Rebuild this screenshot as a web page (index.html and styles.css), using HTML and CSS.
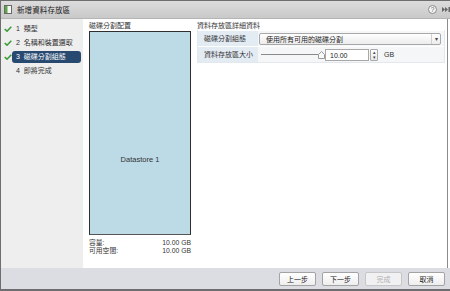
FILE: index.html
```html
<!DOCTYPE html>
<html lang="zh-Hant">
<head>
  <meta charset="UTF-8">
  <title>新增資料存放區</title>
  <link rel="stylesheet" href="styles.css">
</head>
<body>
  <div class="dialog">
    <div class="titlebar">
      <svg class="title-icon" width="8" height="9" viewBox="0 0 8 9">
        <rect x="0.5" y="0.5" width="7" height="8" fill="#f6f6f6" stroke="#6a6a6a"/>
        <rect x="1" y="1" width="2.5" height="7" fill="#5aa845"/>
      </svg>
      <span class="title">新增資料存放區</span>
      <span class="tools">
        <svg width="9" height="9" viewBox="0 0 9 9">
          <circle cx="4.5" cy="4.5" r="4" fill="#f4f4f4" stroke="#8a8a8a"/>
          <text x="4.5" y="7" text-anchor="middle" font-size="6.5" font-family="Liberation Sans, sans-serif" fill="#666">?</text>
        </svg>
        <svg width="8" height="9" viewBox="0 0 8 9">
          <path d="M0 2 L3 4.5 L0 7 Z M3 2 L6 4.5 L3 7 Z" fill="#666"/>
          <rect x="6.5" y="2" width="1.5" height="5" fill="#666"/>
        </svg>
      </span>
    </div>

    <div class="main">
      <div class="steps">
        <div class="step">
          <span class="check"><svg width="8" height="6" viewBox="0 0 8 6"><path d="M0.7 3 L3 5.2 L7.3 0.8" fill="none" stroke="#3f9b3a" stroke-width="1.6"/></svg></span>
          <span class="step-label">1&nbsp; 類型</span>
        </div>
        <div class="step">
          <span class="check"><svg width="8" height="6" viewBox="0 0 8 6"><path d="M0.7 3 L3 5.2 L7.3 0.8" fill="none" stroke="#3f9b3a" stroke-width="1.6"/></svg></span>
          <span class="step-label">2&nbsp; 名稱和裝置選取</span>
        </div>
        <div class="step">
          <span class="check"><svg width="8" height="6" viewBox="0 0 8 6"><path d="M0.7 3 L3 5.2 L7.3 0.8" fill="none" stroke="#3f9b3a" stroke-width="1.6"/></svg></span>
          <span class="step-label current">3&nbsp; 磁碟分割組態</span>
        </div>
        <div class="step">
          <span class="check"></span>
          <span class="step-label">4&nbsp; 即將完成</span>
        </div>
      </div>

      <div class="content">
        <div class="layout-col">
          <div class="heading">磁碟分割配置</div>
          <div class="partition">Datastore 1</div>
          <div class="info">
            <div class="info-row"><span>容量:</span><span>10.00 GB</span></div>
            <div class="info-row"><span>可用空間:</span><span>10.00 GB</span></div>
          </div>
        </div>

        <div class="details-col">
          <div class="heading">資料存放區詳細資料</div>
          <div class="details">
            <div class="row">
              <div class="label">磁碟分割組態</div>
              <div class="value">
                <div class="select">
                  <span>使用所有可用的磁碟分割</span>
                  <span class="arrow">▾</span>
                </div>
              </div>
            </div>
            <div class="row">
              <div class="label">資料存放區大小</div>
              <div class="value">
                <div class="slider">
                  <span class="track"></span>
                  <svg class="thumb" width="7" height="8" viewBox="0 0 7 8">
                    <path d="M3.5 0.5 L6.5 3.5 L6.5 7.5 L0.5 7.5 L0.5 3.5 Z" fill="#fafafa" stroke="#999"/>
                  </svg>
                </div>
                <div class="number">10.00</div>
                <div class="spinner">
                  <span>▴</span>
                  <span>▾</span>
                </div>
                <span class="unit">GB</span>
              </div>
            </div>
          </div>
        </div>
      </div>
    </div>

    <div class="footer">
      <button class="btn">上一步</button>
      <button class="btn">下一步</button>
      <button class="btn disabled">完成</button>
      <button class="btn">取消</button>
    </div>
  </div>
</body>
</html>
```

FILE: styles.css
```css
/* Basic Reset */
* {
  margin: 0;
  padding: 0;
  box-sizing: border-box;
}

body {
  background: #ffffff;
  font-family: "Liberation Sans", "Noto Sans CJK TC", sans-serif;
  font-size: 7px;
  color: #333;
}

.dialog {
  width: 450px;
  height: 291px;
  border: 1px solid #6e6e6e;
  border-right: none;
  display: flex;
  flex-direction: column;
  background: #fff;
}

/* Title bar */
.titlebar {
  height: 18px;
  display: flex;
  align-items: center;
  padding-left: 3px;
  background: linear-gradient(#dcdcdc, #c9c9c9);
  border-bottom: 1px solid #b5b5b5;
}

.title-icon {
  margin-right: 5px;
}

.title {
  font-size: 7.5px;
  color: #222;
  letter-spacing: 0.1px;
}

.tools {
  margin-left: auto;
  display: flex;
  align-items: center;
  gap: 5px;
  width: 22px;
  overflow: hidden;
}

/* Main area */
.main {
  height: 249px;
  display: flex;
}

.steps {
  width: 82px;
  background: #eeeeee;
  padding-top: 3px;
}

.step {
  height: 14px;
  display: flex;
  align-items: center;
}

.check {
  width: 11px;
  padding-left: 3px;
  display: flex;
}

.step-label {
  flex: 1;
  height: 12px;
  line-height: 12px;
  margin-right: 2px;
  padding-left: 4px;
  border-radius: 3px;
  color: #333;
}

.step-label.current {
  background: #284a70;
  color: #fff;
}

.content {
  flex: 1;
  display: flex;
  gap: 6px;
  padding: 0 0 0 6px;
  border-right: 1px solid #8c8c8c;
  margin-right: 2px;
}

.heading {
  height: 12px;
  padding-top: 1px;
  line-height: 11px;
  color: #333;
}

/* Partition layout column */
.layout-col {
  width: 102px;
}

.partition {
  height: 204px;
  background: #bddae7;
  border: 1px solid #2f2f2f;
  border-bottom-color: #555;
  display: flex;
  justify-content: center;
  padding-top: 123px;
  font-size: 7.5px;
  color: #333;
}

.info {
  margin-top: 4px;
}

.info-row {
  height: 8px;
  line-height: 8px;
  display: flex;
  justify-content: space-between;
  font-size: 6.8px;
}

/* Details column */
.details-col {
  flex: 1;
}

.details-col .heading {
  height: 11px;
}

.details {
  border: 1px solid #e3e8ee;
  border-top: none;
  margin-right: 2px;
}

.row {
  height: 16px;
  display: flex;
  border-top: 1px solid #fff;
}

.label {
  width: 60px;
  background: #e3ebf3;
  line-height: 15px;
  padding-left: 6px;
  color: #333;
}

.value {
  flex: 1;
  background: #f4f6f8;
  display: flex;
  align-items: center;
  padding: 0 3px 0 1px;
}

.select {
  flex: 1;
  height: 12px;
  display: flex;
  align-items: center;
  padding-left: 6px;
  border: 1px solid #a8a8a8;
  border-radius: 2px;
  background: linear-gradient(#ffffff, #ececec);
  color: #222;
}

.select .arrow {
  margin-left: auto;
  width: 9px;
  height: 10px;
  line-height: 10px;
  text-align: center;
  border-left: 1px solid #d0d0d0;
  font-size: 6px;
  color: #444;
}

.slider {
  width: 66px;
  display: flex;
  align-items: center;
  padding-left: 2px;
}

.track {
  width: 58px;
  height: 1px;
  background: #8a8a8a;
}

.thumb {
  margin-left: -1px;
}

.number {
  width: 44px;
  height: 12px;
  line-height: 11px;
  padding-left: 4px;
  border: 1px solid #a8a8a8;
  background: #fff;
  color: #222;
  font-size: 7px;
}

.spinner {
  width: 8px;
  height: 12px;
  margin-left: 1px;
  display: flex;
  flex-direction: column;
  border: 1px solid #a8a8a8;
  border-radius: 1px;
  background: linear-gradient(#fff, #e8e8e8);
}

.spinner span {
  height: 5px;
  line-height: 5px;
  font-size: 5px;
  text-align: center;
  color: #444;
}

.unit {
  margin-left: 6px;
  color: #333;
}

/* Footer */
.footer {
  height: 22px;
  background: #dcdde2;
  display: flex;
  align-items: center;
  justify-content: flex-end;
  gap: 6px;
  padding-right: 5px;
  border-bottom: 1px solid #6e6e6e;
}

.btn {
  width: 37px;
  height: 14px;
  border: 1px solid #a3a3a3;
  border-radius: 2px;
  background: linear-gradient(#ffffff, #eeeeee);
  font-family: "Liberation Sans", "Noto Sans CJK TC", sans-serif;
  font-size: 7px;
  color: #222;
}

.btn.disabled {
  color: #b0b0b0;
  border-color: #c6c6c6;
  background: #f1f1f3;
}
```
